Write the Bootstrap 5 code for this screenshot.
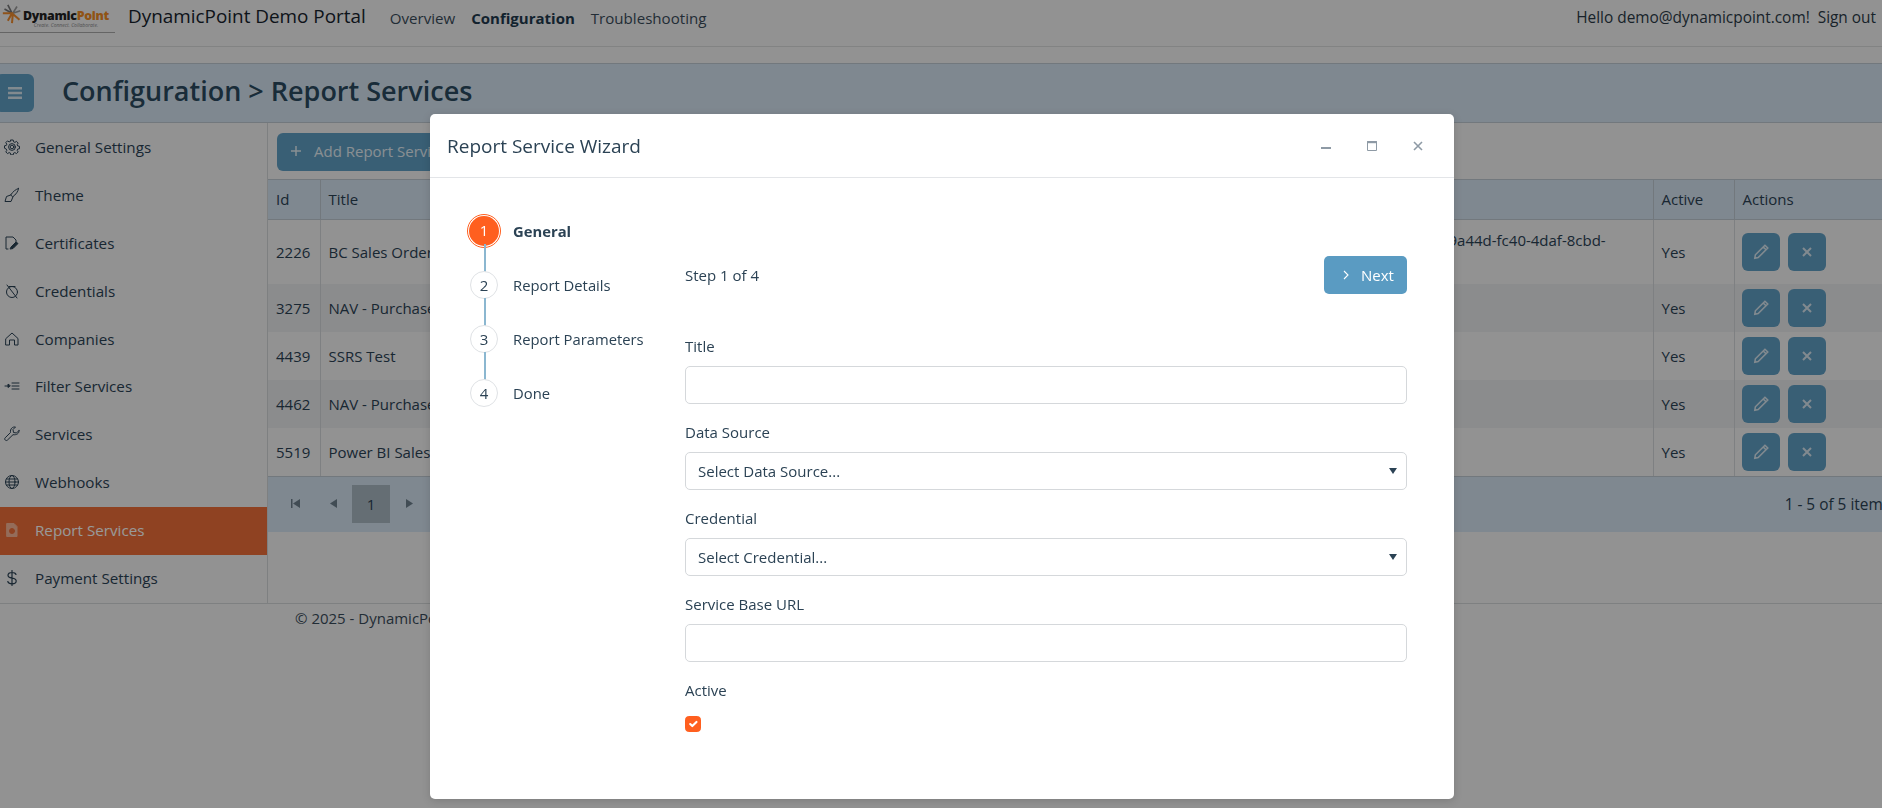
<!DOCTYPE html>
<html lang="en">
<head>
  <meta charset="UTF-8" />
  <meta name="viewport" content="width=device-width, initial-scale=1.0"/>
  <title>Report Services - DynamicPoint Demo Portal</title>
  <link href="https://cdn.jsdelivr.net/npm/bootstrap@5.3.0/dist/css/bootstrap.min.css" rel="stylesheet" />
  <style>
    html, body { height: 100%; overflow: hidden; }
    body { background: #f3f3f4; color: #2b4254; font-family: "Open Sans", sans-serif; font-size: 15px; line-height: 24px; }
    svg { display: block; flex: none; }

    /* top bar */
    .top-bar { height: 47px; border-bottom: 1px solid #d9dadb; padding-right: 6px; }
    .logo-box { width: 115px; height: 33px; border-bottom: 1px solid #a9a9a9; gap: 1px; padding-left: 2px; }
    .logo-word { font-weight: 800; font-size: 12.4px; line-height: 13px; color: #222; letter-spacing: -.3px; white-space: nowrap; margin-top: 9px; }
    .logo-word span { color: #f08a24; }
    .logo-tag { font-size: 5px; line-height: 6px; color: #888; font-style: italic; text-align: center; white-space: nowrap; }
    .brand-name { font-size: 18.9px; color: #16222c; margin-left: 13px; margin-right: 24px; }
    .top-link { color: #3a4c5a; text-decoration: none; margin-right: 16px; font-size: 15.1px; margin-top: 6px; }
    .top-link.on { font-weight: 700; color: #1f3a4d; font-size: 15px; }
    .hello { color: #2b3a46; font-size: 15.4px; margin-top: 6px; }

    /* title band */
    .title-band { margin-top: 16px; height: 60px; background: #d4e3f0; border-top: 1px solid #bfc9d1; border-bottom: 1px solid #bfc9d1; }
    .menu-btn { width: 38px; height: 38px; margin-left: -4px; background: #5f9ec3; border-radius: 6px; }
    .page-title { font-size: 27px; font-weight: 600; color: #2b4a5f; margin: -5px 0 0 28px; line-height: 38px; }

    /* side menu */
    .page-split { height: 481px; border-bottom: 1px solid #d3d5d7; }
    .side-menu { width: 268px; flex: none; border-right: 1px solid #d3d5d7; padding-top: 1px; }
    .side-link { height: 48px; padding: 0 0 2px 4px; gap: 15px; color: #2b4254; text-decoration: none; font-size: 15.2px; }
    .side-link svg { width: 16px; height: 16px; fill: none; stroke: currentColor; stroke-width: 1; stroke-linecap: round; stroke-linejoin: round; }
    .side-link.on { background: #ee6f3a; color: #fff; }

    /* grid */
    .grid-area { width: 1626px; flex: none; }
    .grid-tools { height: 56px; padding: 10px 0 8px 9px; background: #f3f3f4; }
    .add-btn { height: 38px; width: 260px; background: #5f9ec3; color: #e4eef5; border-radius: 6px; padding: 0 0 2px 13px; gap: 12px; }
    .grid-table { table-layout: fixed; width: 100%; margin: 0; border-collapse: collapse; }
    .grid-table th, .grid-table td { border: 0; border-left: 1px solid #d3d6d9; padding: 0 8px; vertical-align: middle; background: transparent; color: #2b4254; font-weight: 400; box-shadow: none; }
    .grid-table th:first-child, .grid-table td:first-child { border-left: 0; }
    .grid-table thead th { height: 40px; padding-bottom: 2px; background: #d4e3f0; border-top: 1px solid #bfc9d1; border-bottom: 1px solid #bfc9d1; border-left-color: #bfc9d1; }
    .grid-table tbody tr { height: 48px; }
    .grid-table tbody tr.tall-row { height: 64px; }
    .grid-table tbody tr:nth-child(even) td { background: #e8e9eb; }
    .grid-table .url-cell { vertical-align: top; padding-top: 8px; white-space: nowrap; }
    .grid-table td:last-child { padding-left: 7px; }
    .row-btn { width: 38px; height: 38px; background: #5f9ec3; border-radius: 6px; }
    .row-btn svg { stroke: #d8e6ef; fill: none; }
    .pager-strip { height: 56px; background: #d4e3f0; border-top: 1px solid #bfc9d1; padding: 8px 0 0 8px; }
    .pager-btn { width: 38px; height: 38px; }
    .pager-btn.on { background: #a9b7c2; color: #2b4254; }
    .pager-btn svg { fill: #6d7f8d; }
    .pager-count { padding-right: 4px; font-size: 15.4px; }
    .copy-line { padding: 2px 0 0 295px; color: #3a4c5a; }

    /* wizard window */
    .modal-backdrop.show { opacity: .4; }
    .wizard-win { position: absolute; left: 430px; top: 114px; width: 1024px; height: 685px; z-index: 1060; background: #fff; border: 0; border-radius: 5px; color: #2b4254; box-shadow: 0 2px 8px rgba(0,0,0,.15); }
    .wizard-win .modal-header { height: 64px; padding: 0 31px 0 17px; border-bottom: 1px solid #e3e5e8; }
    .wizard-title { font-size: 19px; font-weight: 400; margin: 2px 0 0; }
    .win-tools { gap: 36px; }
    .wizard-body { padding: 26px 47px 0 37px; }
    .step-list { width: 218px; flex: none; list-style: none; margin: 0; padding: 0; }
    .step-item { position: relative; height: 54px; gap: 12px; font-size: 14.8px; }
    .step-item:not(:last-child)::after { content: ""; position: absolute; left: 17px; top: 40px; width: 2px; height: 28px; background: #8bb7d0; }
    .step-dot { width: 34px; height: 34px; flex: none; }
    .step-num { width: 28px; height: 28px; border-radius: 50%; border: 1px solid #dfe2e5; background: #fff; font-size: 15px; line-height: 26px; text-align: center; }
    .step-item.on .step-num { width: 34px; height: 34px; line-height: 28px; background: #ff5f1f; color: #fff; border: 2px solid #fff; outline: 1px solid #ff5f1f; outline-offset: -1px; }
    .step-item.on .step-text { font-weight: 700; }
    .wizard-form { flex: 1; padding-top: 52px; }
    .step-head { height: 38px; margin-bottom: 40px; }
    .next-btn { width: 83px; height: 38px; gap: 12px; background: #5a9bc2; border: 0; border-radius: 5px; color: #fff; font-size: 15px; padding: 0 0 0 19px; }
    .field-group { margin-bottom: 16px; }
    .field-group .form-label { margin-bottom: 8px; line-height: 24px; display: block; }
    .field-group .form-control, .field-group .form-select { height: 38px; border-radius: 5px; border: 1px solid #d5d8db; font-size: 15px; color: #2b4254; padding: 0 12px; box-shadow: none; }
    .field-group .form-select { background-image: url("data:image/svg+xml,%3Csvg xmlns='http://www.w3.org/2000/svg' viewBox='0 0 8 6'%3E%3Cpath d='M0 0h8L4 6z' fill='%232b4254'/%3E%3C/svg%3E"); background-size: 8px 6px; background-position: right 9px center; }
    .check-box { width: 16px; height: 16px; margin: 14px 0 0; display: block; border-radius: 3px; }
    .check-box:checked { background-color: #ff5f1f; border-color: #ff5f1f; }
  </style>
</head>
<body>
  <!-- Top bar -->
  <div class="top-bar d-flex align-items-start">
    <div class="logo-box d-flex align-items-start">
      <svg width="20" height="20" viewBox="0 0 24 24" class="mt-1">
        <path d="M12 11 7 1M12 11 3 6" stroke="#777" stroke-width="2" fill="none"/>
        <path d="M13 11 18 3M13 11l9-3" stroke="#999" stroke-width="2" fill="none"/>
        <path d="M1 11h11l-5 9M13 12l-1 11M13 12l8 7" stroke="#ee8a2c" stroke-width="2.4" fill="none"/>
      </svg>
      <div>
        <div class="logo-word">Dynamic<span>Point</span></div>
        <div class="logo-tag">Create. Connect. Collaborate.</div>
      </div>
    </div>
    <div class="brand-name mt-1">DynamicPoint Demo Portal</div>
    <a class="top-link" href="#">Overview</a>
    <a class="top-link on" href="#">Configuration</a>
    <a class="top-link" href="#">Troubleshooting</a>
    <div class="hello ms-auto">Hello demo@dynamicpoint.com!&nbsp; Sign out</div>
  </div>

  <!-- Title -->
  <div class="title-band d-flex align-items-center">
    <div class="menu-btn d-flex align-items-center justify-content-center">
      <svg width="14" height="12" viewBox="0 0 14 12" fill="#d8e6ef"><path d="M0 0h14v2.4H0zM0 4.8h14v2.4H0zM0 9.6h14V12H0z"/></svg>
    </div>
    <h1 class="page-title">Configuration &gt; Report Services</h1>
  </div>

  <div class="page-split d-flex">
    <nav class="side-menu d-flex flex-column">
      <a class="side-link d-flex align-items-center" href="#"><svg viewBox="0 0 16 16"><path d="M6.800 1h2.400l.4 1.800 1.300.6 1.600-1 1.700 1.700-1 1.600.5 1.200 1.800.4v2.400l-1.800.4-.5 1.300 1 1.500-1.700 1.700-1.600-1-1.300.5-.4 1.800H6.800l-.4-1.800-1.300-.5-1.600 1-1.700-1.700 1-1.500-.5-1.300L.5 9.200V6.800l1.800-.4.5-1.200-1-1.600L3.500 1.900l1.600 1 1.300-.6z"/><circle cx="8" cy="8" r="3.400"/><circle cx="8" cy="8" r="1.800"/></svg><span>General Settings</span></a>
      <a class="side-link d-flex align-items-center" href="#"><svg viewBox="0 0 16 16"><path d="M14.500 1.500c-2.500.5-6 3.500-7.800 6.500l2 1.800c3-2 5.800-5.800 5.800-8.300zM6.700 8 2.500 9.500 1 14.500h6l2-4.700"/></svg><span>Theme</span></a>
      <a class="side-link d-flex align-items-center" href="#"><svg viewBox="0 0 16 16"><path d="M4 14H2V2h7l3 3v2"/><path d="m7 12 5-5 2 1.500-5 5-2.500.5z" fill="currentColor"/></svg><span>Certificates</span></a>
      <a class="side-link d-flex align-items-center" href="#"><svg viewBox="0 0 16 16"><ellipse cx="8" cy="9" rx="5.500" ry="5.500"/><path d="M5 3.500h6M3 2l10 13"/></svg><span>Credentials</span></a>
      <a class="side-link d-flex align-items-center" href="#"><svg viewBox="0 0 16 16"><path d="M2 7.500 8 2l6 5.500V14h-3.500V9h-5v5H2z"/></svg><span>Companies</span></a>
      <a class="side-link d-flex align-items-center" href="#"><svg viewBox="0 0 16 16"><path d="M8 5h7M8 8h7M8 11h7M1 8h3"/><path d="M4 6.500v3L6 8z" fill="currentColor"/></svg><span>Filter Services</span></a>
      <a class="side-link d-flex align-items-center" href="#"><svg viewBox="0 0 16 16"><path d="M15 4.500 12.500 7 9.500 6.500 9 3.500 11.500 1C8.500.5 6 2.800 6.500 6.500L1.200 11.800c-.7.7-.7 1.500 0 2.200s1.600.7 2.300 0L9 8.700c3.500.5 6.500-1.200 6-4.200z"/></svg><span>Services</span></a>
      <a class="side-link d-flex align-items-center" href="#"><svg viewBox="0 0 16 16"><circle cx="8" cy="8" r="6.500"/><ellipse cx="8" cy="8" rx="3" ry="6.500"/><path d="M1.500 8h13M2.500 5h11M2.500 11h11"/></svg><span>Webhooks</span></a>
      <a class="side-link on d-flex align-items-center" href="#"><svg viewBox="0 0 16 16"><path d="M3 1.500h7l3 3v10H3z" fill="#f7b496" stroke="#f7b496"/><circle cx="8" cy="9" r="2.500" fill="#ee6f3a" stroke="#ee6f3a"/></svg><span>Report Services</span></a>
      <a class="side-link d-flex align-items-center" href="#"><svg viewBox="0 0 16 16"><path d="M12 4.500C11.500 3 10 2.500 8 2.500c-2.500 0-4 1-4 2.800s1.500 2.400 4 2.800 4.200 1 4.200 2.900-1.700 2.800-4.200 2.800c-2.200 0-3.700-.8-4.200-2.300M8 .5v15" stroke-width="1.200"/></svg><span>Payment Settings</span></a>
    </nav>

    <div class="grid-area">
      <div class="grid-tools">
        <div class="add-btn d-flex align-items-center">
          <svg width="12" height="12" viewBox="0 0 12 12" stroke="#e4eef5" stroke-width="1.500"><path d="M6 1v10M1 6h10"/></svg>
          <span>Add Report Service</span>
        </div>
      </div>
      <table class="table grid-table">
        <colgroup>
          <col style="width:52px"><col style="width:560px"><col style="width:560px"><col style="width:213px"><col style="width:81px"><col>
        </colgroup>
        <thead>
          <tr><th>Id</th><th>Title</th><th></th><th></th><th>Active</th><th>Actions</th></tr>
        </thead>
        <tbody id="gridRows"></tbody>
      </table>
      <div class="pager-strip d-flex">
        <div class="pager-btn d-flex align-items-center justify-content-center"><svg width="9" height="9" viewBox="0 0 9 9"><path d="M0 0h1.500v9H0zM9 0v9L2 4.500z"/></svg></div>
        <div class="pager-btn d-flex align-items-center justify-content-center"><svg width="7" height="9" viewBox="0 0 7 9"><path d="M7 0v9L0 4.500z"/></svg></div>
        <div class="pager-btn on d-flex align-items-center justify-content-center">1</div>
        <div class="pager-btn d-flex align-items-center justify-content-center"><svg width="7" height="9" viewBox="0 0 7 9"><path d="M0 0v9l7-4.500z"/></svg></div>
        <div class="pager-count ms-auto pt-2">1 - 5 of 5 items</div>
      </div>
    </div>
  </div>
  <div class="copy-line">&copy; 2025 - DynamicPoint</div>

  <div class="modal-backdrop show"></div>

  <!-- Wizard window -->
  <div class="modal-content wizard-win">
    <div class="modal-header d-flex align-items-center justify-content-between">
      <h5 class="wizard-title">Report Service Wizard</h5>
      <div class="win-tools d-flex align-items-center">
        <svg width="10" height="10" viewBox="0 0 10 10" fill="#8e9aa5"><path d="M0 6h10v2H0z"/></svg>
        <svg width="10" height="10" viewBox="0 0 10 10" fill="none" stroke="#8e9aa5"><path d="M.5.5h9v9h-9z"/><path d="M0 1.200h10" stroke-width="2"/></svg>
        <svg width="10" height="10" viewBox="0 0 10 10" stroke="#8e9aa5" stroke-width="1.600"><path d="m1 1 8 8M9 1 1 9"/></svg>
      </div>
    </div>
    <div class="wizard-body d-flex">
      <ul class="step-list">
        <li class="step-item on d-flex align-items-center"><span class="step-dot d-flex align-items-center justify-content-center"><span class="step-num">1</span></span><span class="step-text">General</span></li>
        <li class="step-item d-flex align-items-center"><span class="step-dot d-flex align-items-center justify-content-center"><span class="step-num">2</span></span><span class="step-text">Report Details</span></li>
        <li class="step-item d-flex align-items-center"><span class="step-dot d-flex align-items-center justify-content-center"><span class="step-num">3</span></span><span class="step-text">Report Parameters</span></li>
        <li class="step-item d-flex align-items-center"><span class="step-dot d-flex align-items-center justify-content-center"><span class="step-num">4</span></span><span class="step-text">Done</span></li>
      </ul>
      <form class="wizard-form">
        <div class="step-head d-flex align-items-center justify-content-between">
          <span>Step 1 of 4</span>
          <button type="button" class="next-btn d-flex align-items-center">
            <svg width="6" height="10" viewBox="0 0 6 10" fill="none" stroke="#fff" stroke-width="1.100"><path d="m1 1 4 4-4 4"/></svg>
            <span>Next</span>
          </button>
        </div>
        <div class="field-group"><label class="form-label">Title</label><input class="form-control" type="text"></div>
        <div class="field-group"><label class="form-label">Data Source</label><select class="form-select"><option>Select Data Source...</option></select></div>
        <div class="field-group"><label class="form-label">Credential</label><select class="form-select"><option>Select Credential...</option></select></div>
        <div class="field-group"><label class="form-label">Service Base URL</label><input class="form-control" type="text"></div>
        <div class="field-group"><label class="form-label mb-0">Active</label><input class="form-check-input check-box" type="checkbox" checked></div>
      </form>
    </div>
  </div>

  <script>
    // grid rows
    const rows = [
      ["2226", "BC Sales Order", "9a44d-fc40-4daf-8cbd-"],
      ["3275", "NAV - Purchase Order", ""],
      ["4439", "SSRS Test", ""],
      ["4462", "NAV - Purchase Order", ""],
      ["5519", "Power BI Sales", ""]
    ];
    const pencil = '<svg width="18" height="18" viewBox="0 0 16 16" stroke-width="1.400"><path d="M11.500 2 14 4.500 5.500 13 2.500 13.500 3 10.500zM10 3.500 12.500 6"/></svg>';
    const cross = '<svg width="12" height="12" viewBox="0 0 12 12" stroke-width="2"><path d="m2 2 8 8M10 2l-8 8"/></svg>';
    document.getElementById("gridRows").innerHTML = rows.map((r, i) => `
      <tr class="${i === 0 ? "tall-row" : ""}">
        <td>${r[0]}</td><td>${r[1]}</td><td></td><td class="url-cell">${r[2]}</td><td>Yes</td>
        <td><div class="d-flex gap-2">
          <div class="row-btn d-flex align-items-center justify-content-center">${pencil}</div>
          <div class="row-btn d-flex align-items-center justify-content-center">${cross}</div>
        </div></td>
      </tr>`).join("");
  </script>
  <script src="https://cdn.jsdelivr.net/npm/bootstrap@5.3.0/dist/js/bootstrap.bundle.min.js" defer></script>
</body>
</html>
